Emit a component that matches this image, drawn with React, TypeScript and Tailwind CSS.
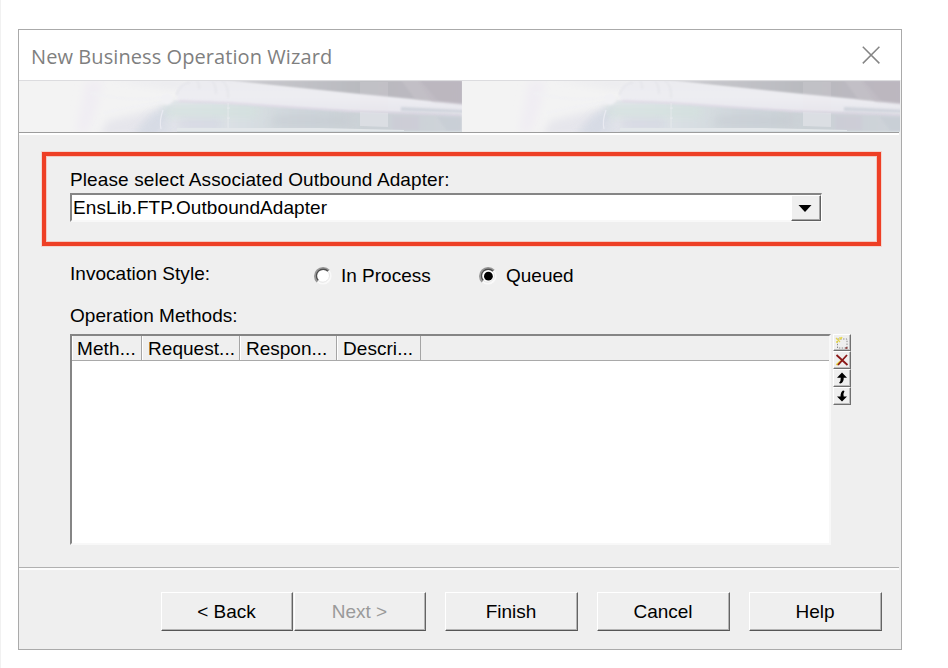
import React from "react";

function BannerArt({ id, className }: { id: string; className: string }) {
  return (
    <svg className={className} viewBox="0 0 443 51" preserveAspectRatio="xMinYMin slice" aria-hidden="true">
      <defs>
        <linearGradient id={id + "low"} x1="0" x2="1" y1="0" y2="0">
          <stop offset="0" stopColor="#e4e5eb" />
          <stop offset="0.2" stopColor="#dce2e6" />
          <stop offset="0.45" stopColor="#d0d7dc" />
          <stop offset="0.7" stopColor="#cbd1d6" />
          <stop offset="1" stopColor="#cfd4da" />
        </linearGradient>
        <linearGradient id={id + "sky"} x1="0" x2="1" y1="0" y2="0">
          <stop offset="0" stopColor="#dcdce2" />
          <stop offset="0.25" stopColor="#c6c6cb" />
          <stop offset="0.6" stopColor="#b9babf" />
          <stop offset="1" stopColor="#bdb9c1" />
        </linearGradient>
        <linearGradient id={id + "tube"} x1="0" x2="0" y1="0" y2="1">
          <stop offset="0" stopColor="#ebebf0" />
          <stop offset="0.5" stopColor="#ededf2" />
          <stop offset="1" stopColor="#e7e6ed" />
        </linearGradient>
        <filter id={id + "b1"} x="-10%" y="-30%" width="120%" height="160%">
          <feGaussianBlur stdDeviation="0.8" />
        </filter>
        <filter id={id + "b4"} x="-20%" y="-50%" width="140%" height="200%">
          <feGaussianBlur stdDeviation="4" />
        </filter>
      </defs>
      <rect width="443" height="51" fill="#f3f3f3" />
      <path d="M67 0 H84 L78 26 L70 51 H57 Z" fill="#f0edf3" filter={`url(#${id}b4)`} />
      <path d="M80 56 L88 40 L150 25 L210 22 V56 Z" fill="#e6e6ec" filter={`url(#${id}b4)`} />
      <path d="M112 58 L130 36 L156 22 L210 22 V58 Z" fill="#dadee6" filter={`url(#${id}b4)`} />
      <path d="M156 20 L210 21 L443 33 V51 H138 Z" fill={`url(#${id}low)`} filter={`url(#${id}b1)`} />
      <path d="M115 54 L137 32 L152 26 L150 54 Z" fill="#d4d9e4" opacity=".6" filter={`url(#${id}b4)`} />
      <path d="M145 25 L240 25 V36 L145 36 Z" fill="#d4e2de" opacity=".8" filter={`url(#${id}b4)`} />
      <path d="M160 38 H203 V48 H160 Z" fill="#d2d2e0" opacity=".6" filter={`url(#${id}b4)`} />
      <path d="M90 -2 H225 L200 6 L150 8 Z" fill="#ebebef" filter={`url(#${id}b4)`} />
      <path d="M185 -1 H444 V25 L335 14 L215 1 Z" fill={`url(#${id}sky)`} filter={`url(#${id}b1)`} />
      <path d="M157 13 Q161 1 174 0 H210 L335 12.5 L444 23 V32 L330 30 L210 22 L160 19 Z" fill={`url(#${id}tube)`} filter={`url(#${id}b1)`} />
      <path d="M72 12 Q115 22 145 16 M84 32 Q115 25 145 21" fill="none" stroke="#f1f1f4" strokeWidth="2" filter={`url(#${id}b1)`} />
      <path d="M157 14 Q161 3 171 1 M178 0 Q181 3 180 8 M193 0 Q197 4 197 13 M203 0 Q210 4 209 17" fill="none" stroke="#dedfe4" strokeWidth="1" filter={`url(#${id}b1)`} />
      <circle cx="148" cy="18" r="5.5" fill="#f1f1f4" filter={`url(#${id}b1)`} />
      <path d="M142 48 Q140 40 144 29" fill="none" stroke="#e9eaf1" strokeWidth="1.2" />
      <path d="M160 20 L210 22 L330 30 L443 34" fill="none" stroke="#dfd7e5" strokeWidth="1.4" filter={`url(#${id}b1)`} />
      <path d="M209 22 V48 M208 27 H211 M208 37 H211" fill="none" stroke="#e9ecef" strokeWidth=".7" />
      <path d="M255 35 Q300 36 330 34 V45 H250 Z" fill="#c1c6ce" opacity=".45" filter={`url(#${id}b4)`} />
      <path d="M341 1 H369 V46 L341 45 Z" fill="#eae4ea" opacity=".16" />
      <path d="M341 31 L369 32 V46 L341 45 Z" fill="#e6e7ed" opacity=".5" />
      <path d="M382 -1 H401 L420 21 L396 18 Z" fill="#cdc9cf" opacity=".4" filter={`url(#${id}b1)`} />
      <path d="M399 0 L413 21 L443 24 V0 Z" fill="#bcb4bf" opacity=".3" filter={`url(#${id}b1)`} />
      <path d="M382 26 L444 29 V32 L382 30 Z" fill="#c6ccd5" opacity=".7" filter={`url(#${id}b1)`} />
      <path d="M374 35 L400 35 V49 H374 Z" fill="#cdc6d6" opacity=".4" filter={`url(#${id}b1)`} />
      <path d="M418 36 L444 36 V50 H428 Z" fill="#c3c8d1" opacity=".4" filter={`url(#${id}b1)`} />
      <path d="M158 47 H300 L385 49 V50 H158 Z" fill="#e3e7ea" />
      <path d="M158 50.5 H443" stroke="#d5dce0" strokeWidth="1" />
    </svg>
  );
}

function Radio({ checked }: { checked?: boolean }) {
  return (
    <svg className="size-[18px] shrink-0" viewBox="0 0 18 18" role="img" aria-label={checked ? "selected" : "not selected"}>
      <circle cx="9" cy="9" r="8.6" fill="#f9f9f9" />
      <path d="M3.2 14.8 A8.1 8.1 0 0 1 15 3.4" fill="none" stroke="#979797" strokeWidth="1.8" />
      <circle cx="9.2" cy="9.1" r="6.8" fill="#fff" />
      <path d="M4.3 13.6 A6.7 6.7 0 0 1 14 4.3" fill="none" stroke="#4d4d4d" strokeWidth="1.4" />
      <path d="M4.7 13.9 A6.7 6.7 0 0 0 14.3 4.8" fill="none" stroke="#e3e3e3" strokeWidth="1" />
      {checked && <circle cx="9.4" cy="9.2" r="4.4" fill="#000" />}
    </svg>
  );
}

function PushButton({ label, disabled, className }: { label: string; disabled?: boolean; className: string }) {
  return (
    <button
      className={`h-[39px] border border-t-white border-l-white border-r-[#646464] border-b-[#555555] bg-[#efefef] pr-px text-center shadow-[inset_-1px_-1px_0_#b4b4b4] ${disabled ? "text-[#9a9a9a]" : "text-black"} ${className}`}
    >
      {label}
    </button>
  );
}

function ToolButton({ label, className, children }: { label: string; className: string; children: React.ReactNode }) {
  return (
    <button
      aria-label={label}
      className={`flex w-[18px] items-center justify-center border border-t-white border-l-white border-r-[#707070] border-b-[#707070] bg-[#efefef] shadow-[inset_-1px_-1px_0_#bdbdbd] ${className}`}
    >
      {children}
    </button>
  );
}

function HeaderCell({ label, className }: { label: string; className: string }) {
  return (
    <div className={`border-r border-r-[#a5a5a5] shadow-[inset_1px_0_0_#fff] ${className}`}>{label}</div>
  );
}

export default function App() {
  return (
    <div className="h-[668px] w-[948px] border-l border-[#f1f1f1] bg-white pt-[29px] pl-[17px] font-['Liberation_Sans',Arial,sans-serif] text-[19px] leading-[22px] text-black">
      <div className="flex h-[621px] w-[884px] flex-col border border-[#aaaaaa] bg-[#efefef]">
        <div className="flex h-[50px] shrink-0 items-center justify-between bg-white pr-[20px] pl-[12px]">
          <h1 className="pt-[3px] font-['Open_Sans','Noto_Sans',sans-serif] text-[20px] tracking-[0.08px] whitespace-nowrap text-[#7f7f7f]">
            New Business Operation Wizard
          </h1>
          <svg className="size-[19px]" viewBox="0 0 19 19" fill="none" stroke="#858585" strokeWidth="1.5" aria-label="Close">
            <path d="M.8 .8 L17.4 17.4 M17.4 .8 L.8 17.4" />
          </svg>
        </div>
        <div className="mr-px flex h-[52px] shrink-0 overflow-hidden border-t border-t-[#dcdcdf] bg-[#f3f3f3]">
          <BannerArt id="first" className="h-[51px] w-[443px] shrink-0" />
          <BannerArt id="second" className="h-[51px] w-[443px] shrink-0" />
        </div>
        <div className="mr-[2px] h-[3px] shrink-0 border-t border-b-2 border-t-[#9c9c9c] border-b-white" />

        <main className="flex h-[432px] shrink-0 flex-col pt-[17px]">
          <section className="ml-[23px] h-[94px] w-[839px] shrink-0 border-4 border-[#ee3f25] pt-[13px] pl-6 shadow-[0_0_0_1px_#f3d5d0,inset_0_0_0_1px_#f3c9c2]">
            <label className="block h-6 tracking-[0.11px] whitespace-nowrap">Please select Associated Outbound Adapter:</label>
            <div className="flex h-[29px] w-[752px] border-t-2 border-l-2 border-r border-b-2 border-t-[#858585] border-l-[#858585] border-r-white border-b-[#f8f8f8] bg-white">
              <div className="flex-1 pl-px leading-[25px] tracking-[0.08px] whitespace-nowrap">
                EnsLib.FTP.OutboundAdapter
              </div>
              <div className="flex h-[26px] w-[30px] items-center justify-center border border-t-white border-l-white border-r-[#606060] border-b-[#606060] bg-[#efefef] pr-[2px] shadow-[inset_-1px_-1px_0_#a5a5a5]">
                <svg className="h-[7px] w-[14px]" viewBox="0 0 14 7" aria-hidden="true">
                  <path d="M.5 0 H13.5 L7 7 Z" fill="#000" />
                </svg>
              </div>
            </div>
          </section>

          <div className="mt-[17px] ml-[51px] flex h-6 items-start">
            <span className="w-[244px] tracking-[0.04px]">Invocation Style:</span>
            <span className="flex w-[165px] items-center gap-[9px] pt-[2px]">
              <Radio />
              In Process
            </span>
            <span className="flex items-center gap-[9px] pt-[2px]">
              <Radio checked />
              Queued
            </span>
          </div>
          <div className="mt-[18px] ml-[51px] h-[29px] tracking-[0.04px]">Operation Methods:</div>

          <div className="ml-[51px] flex gap-[2px]">
            <div className="h-[211px] w-[761px] border-2 border-t-[#858585] border-r-[#f8f8f8] border-b-[#f8f8f8] border-l-[#858585] bg-white">
              <div className="flex h-[25px] border-b border-b-[#a9a9a9] bg-[#efefef] leading-[25px]">
                <HeaderCell label="Meth..." className="w-[70px] pl-[5px] tracking-[0.1px]" />
                <HeaderCell label="Request..." className="w-[98px] pl-[6px] tracking-[0.05px]" />
                <HeaderCell label="Respon..." className="w-[97px] pl-[6px]" />
                <HeaderCell label="Descri..." className="w-[84px] pl-[6px] tracking-[0.05px]" />
              </div>
            </div>
            <div className="flex flex-col">
              <ToolButton label="New" className="h-[17px]">
                <svg className="size-[14px]" viewBox="0 0 14 14" fill="none">
                  <rect x="2.5" y="3" width="9.5" height="9" stroke="#8a8a8a" strokeDasharray="1.4 1.4" />
                  <path d="M1 2 L5 6 M5 1 V4 M1 6 H3 M7 1 L6 3" stroke="#e5d64e" strokeWidth="1.3" />
                  <path d="M10.5 12 H12.5" stroke="#7c1b1b" strokeWidth="1.5" />
                </svg>
              </ToolButton>
              <ToolButton label="Delete" className="h-[18px]">
                <svg className="size-[14px]" viewBox="0 0 14 14" fill="none">
                  <path d="M1.5 12 L6 8" stroke="#e4cf39" strokeWidth="2" />
                  <path d="M1.5 2 L12.5 12 M12 2 L3 12" stroke="#8c1919" strokeWidth="1.8" />
                </svg>
              </ToolButton>
              <ToolButton label="Move up" className="h-[18px]">
                <svg className="size-[14px]" viewBox="0 0 14 14">
                  <path d="M7 1.5 L12 6.7 H8.7 Q9 11 5.5 12.5 L4 12 Q6 10 5.8 6.7 H2 Z" fill="#000" />
                </svg>
              </ToolButton>
              <ToolButton label="Move down" className="h-[18px]">
                <svg className="size-[14px]" viewBox="0 0 14 14">
                  <path d="M7 12.5 L12 7.5 H8.7 Q8 4.5 9.5 2 L8 1.5 Q5.5 3 5.5 7.5 H2 Z" fill="#000" />
                </svg>
              </ToolButton>
            </div>
          </div>
        </main>

        <footer className="mr-[2px] flex flex-1 items-start border-t border-t-[#b0b0b0] pt-[24px] pl-[142px] shadow-[inset_0_2px_0_#fcfcfc]">
          <PushButton label="< Back" className="w-[132px]" />
          <PushButton label="Next >" disabled className="ml-px w-[132px]" />
          <PushButton label="Finish" className="ml-[19px] w-[133px]" />
          <PushButton label="Cancel" className="ml-[19px] w-[133px]" />
          <PushButton label="Help" className="ml-[19px] w-[133px]" />
        </footer>
      </div>
    </div>
  );
}
